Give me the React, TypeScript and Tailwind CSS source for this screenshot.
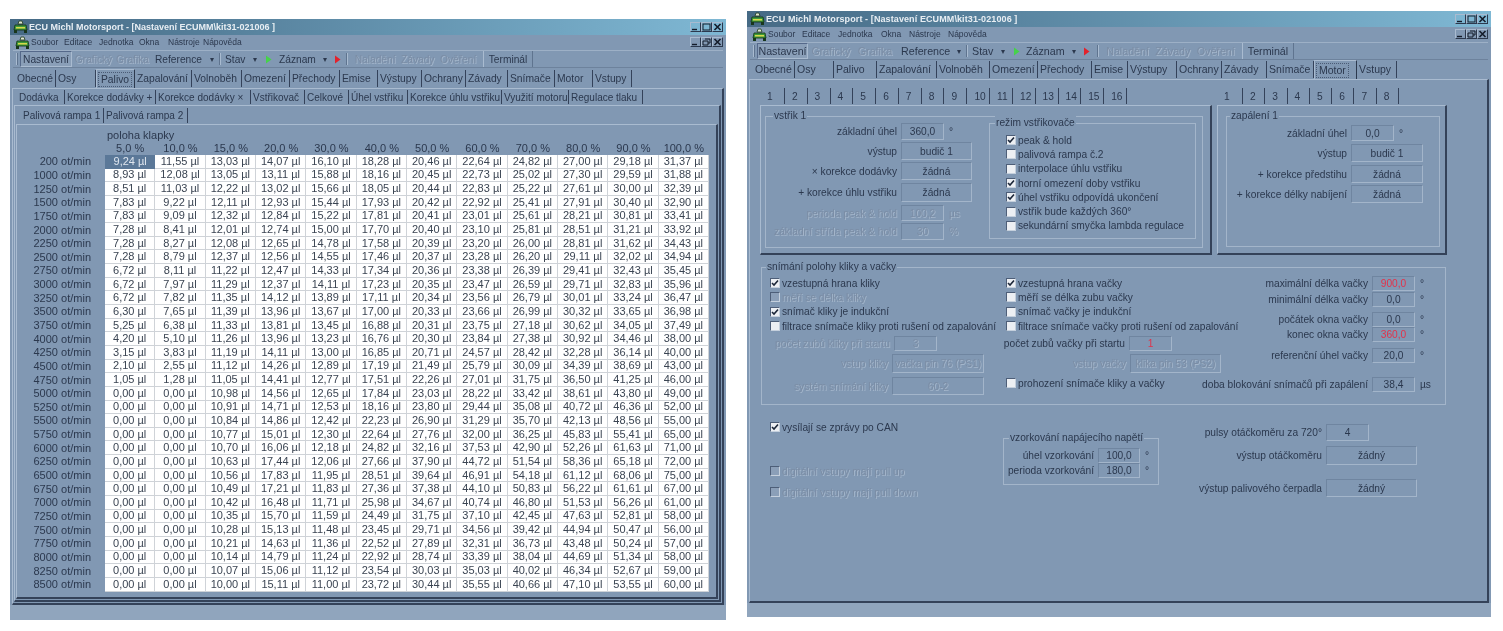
import React from "react";

const ink = "text-[#2b384e]";

type TabDef = [string, number];

const leftTabs: TabDef[] = [
  ["Obecné", 41], ["Osy", 40], ["Palivo", 39], ["Zapalování", 57], ["Volnoběh", 50], ["Omezení", 48], ["Přechody", 50],
  ["Emise", 38], ["Výstupy", 44], ["Ochrany", 44], ["Závady", 42], ["Snímače", 47], ["Motor", 38], ["Vstupy", 39],
];
const rightTabs: TabDef[] = [
  ["Obecné", 42], ["Osy", 39], ["Palivo", 43], ["Zapalování", 60], ["Volnoběh", 53], ["Omezení", 48], ["Přechody", 54],
  ["Emise", 36], ["Výstupy", 49], ["Ochrany", 45], ["Závady", 45], ["Snímače", 47], ["Motor", 43], ["Vstupy", 40],
];
const fuelTabs: TabDef[] = [
  ["Dodávka", 48], ["Korekce dodávky +", 91], ["Korekce dodávky ×", 95], ["Vstřikovač", 54], ["Celkové", 44],
  ["Úhel vstřiku", 59], ["Korekce úhlu vstřiku", 94], ["Využití motoru", 67], ["Regulace tlaku", 74],
];

const throttle = ["5,0 %", "10,0 %", "15,0 %", "20,0 %", "30,0 %", "40,0 %", "50,0 %", "60,0 %", "70,0 %", "80,0 %", "90,0 %", "100,0 %"];

const rows: [number, string][] = [
  [200, "9,24 11,55 13,03 14,07 16,10 18,28 20,46 22,64 24,82 27,00 29,18 31,37"],
  [1000, "8,93 12,08 13,05 13,11 15,88 18,16 20,45 22,73 25,02 27,30 29,59 31,88"],
  [1250, "8,51 11,03 12,22 13,02 15,66 18,05 20,44 22,83 25,22 27,61 30,00 32,39"],
  [1500, "7,83 9,22 12,11 12,93 15,44 17,93 20,42 22,92 25,41 27,91 30,40 32,90"],
  [1750, "7,83 9,09 12,32 12,84 15,22 17,81 20,41 23,01 25,61 28,21 30,81 33,41"],
  [2000, "7,28 8,41 12,01 12,74 15,00 17,70 20,40 23,10 25,81 28,51 31,21 33,92"],
  [2250, "7,28 8,27 12,08 12,65 14,78 17,58 20,39 23,20 26,00 28,81 31,62 34,43"],
  [2500, "7,28 8,79 12,37 12,56 14,55 17,46 20,37 23,28 26,20 29,11 32,02 34,94"],
  [2750, "6,72 8,11 11,22 12,47 14,33 17,34 20,36 23,38 26,39 29,41 32,43 35,45"],
  [3000, "6,72 7,97 11,29 12,37 14,11 17,23 20,35 23,47 26,59 29,71 32,83 35,96"],
  [3250, "6,72 7,82 11,35 14,12 13,89 17,11 20,34 23,56 26,79 30,01 33,24 36,47"],
  [3500, "6,30 7,65 11,39 13,96 13,67 17,00 20,33 23,66 26,99 30,32 33,65 36,98"],
  [3750, "5,25 6,38 11,33 13,81 13,45 16,88 20,31 23,75 27,18 30,62 34,05 37,49"],
  [4000, "4,20 5,10 11,26 13,96 13,23 16,76 20,30 23,84 27,38 30,92 34,46 38,00"],
  [4250, "3,15 3,83 11,19 14,11 13,00 16,85 20,71 24,57 28,42 32,28 36,14 40,00"],
  [4500, "2,10 2,55 11,12 14,26 12,89 17,19 21,49 25,79 30,09 34,39 38,69 43,00"],
  [4750, "1,05 1,28 11,05 14,41 12,77 17,51 22,26 27,01 31,75 36,50 41,25 46,00"],
  [5000, "0,00 0,00 10,98 14,56 12,65 17,84 23,03 28,22 33,42 38,61 43,80 49,00"],
  [5250, "0,00 0,00 10,91 14,71 12,53 18,16 23,80 29,44 35,08 40,72 46,36 52,00"],
  [5500, "0,00 0,00 10,84 14,86 12,42 22,23 26,90 31,29 35,70 42,13 48,56 55,00"],
  [5750, "0,00 0,00 10,77 15,01 12,30 22,64 27,76 32,00 36,25 45,83 55,41 65,00"],
  [6000, "0,00 0,00 10,70 16,06 12,18 24,82 32,16 37,53 42,90 52,26 61,63 71,00"],
  [6250, "0,00 0,00 10,63 17,44 12,06 27,66 37,90 44,72 51,54 58,36 65,18 72,00"],
  [6500, "0,00 0,00 10,56 17,83 11,95 28,51 39,64 46,91 54,18 61,12 68,06 75,00"],
  [6750, "0,00 0,00 10,49 17,21 11,83 27,36 37,38 44,10 50,83 56,22 61,61 67,00"],
  [7000, "0,00 0,00 10,42 16,48 11,71 25,98 34,67 40,74 46,80 51,53 56,26 61,00"],
  [7250, "0,00 0,00 10,35 15,70 11,59 24,49 31,75 37,10 42,45 47,63 52,81 58,00"],
  [7500, "0,00 0,00 10,28 15,13 11,48 23,45 29,71 34,56 39,42 44,94 50,47 56,00"],
  [7750, "0,00 0,00 10,21 14,63 11,36 22,52 27,89 32,31 36,73 43,48 50,24 57,00"],
  [8000, "0,00 0,00 10,14 14,79 11,24 22,92 28,74 33,39 38,04 44,69 51,34 58,00"],
  [8250, "0,00 0,00 10,07 15,06 11,12 23,54 30,03 35,03 40,02 46,34 52,67 59,00"],
  [8500, "0,00 0,00 10,00 15,11 11,00 23,72 30,44 35,55 40,66 47,10 53,55 60,00"],
];

const AppIcon = () => (
  <svg width="15" height="14" viewBox="0 0 15 14" className="shrink-0">
    <path d="M6 1h3l1 3H5z" fill="#dfe6d0" stroke="#1c3a1c" strokeWidth="0.8" />
    <path d="M2 5h11l1 5H1z" fill="#3f9a3c" stroke="#123012" strokeWidth="0.8" />
    <path d="M3 7h9v1.5H3z" fill="#d8d84a" />
    <rect x="1" y="10" width="3" height="3" fill="#18361c" />
    <rect x="11" y="10" width="3" height="3" fill="#18361c" />
  </svg>
);

const Arrow = ({ color }: { color: string }) => (
  <svg width="7" height="9" viewBox="0 0 7 9" className="shrink-0">
    <path d="M1 0.5 6.5 4.5 1 8.5z" fill={color} />
  </svg>
);

const WinBtn = ({ kind }: { kind: "min" | "max" | "restore" | "close" }) => (
  <div className="w-[11px] h-[10px] flex items-center justify-center border-r border-b border-[#2c394e] border-t-[#a9bbd0] border-l-[#a9bbd0] border-t border-l">
    <svg width="9" height="8" viewBox="0 0 9 8">
      {kind === "min" && <path d="M1 6.5h5" stroke="#141c2a" strokeWidth="1.4" />}
      {kind === "max" && <rect x="1" y="1" width="7" height="6" fill="none" stroke="#141c2a" strokeWidth="1" />}
      {kind === "restore" && <path d="M3 1h5v4H6M1 3h5v4H1z" fill="none" stroke="#141c2a" strokeWidth="1" />}
      {kind === "close" && <path d="M1.5 1 7.5 7M7.5 1 1.5 7" stroke="#141c2a" strokeWidth="1.6" />}
    </svg>
  </div>
);

const TitleBar = ({ className = "" }: { className?: string }) => (
  <div className="h-[16px] shrink-0 flex items-center pl-[3px] bg-gradient-to-r from-[#466a85] to-[#7fb8d4] relative">
    <AppIcon />
    <span className={`ml-[1px] text-[9px] font-bold text-[#e8eef3] whitespace-nowrap ${className}`}>
      ECU Michl Motorsport - [Nastavení ECUMM\kit31-021006 ]
    </span>
    <div className="absolute right-[3px] top-[3px] flex">
      <WinBtn kind="min" />
      <WinBtn kind="max" />
      <WinBtn kind="close" />
    </div>
  </div>
);

const Menu = ({ gaps }: { gaps: number[] }) => {
  const items = ["Soubor", "Editace", "Jednotka", "Okna", "Nástroje", "Nápověda"];
  return (
    <div className="h-[15px] flex items-center pl-[5px] relative">
      <AppIcon />
      <div className="flex items-center ml-[1px] text-[8.5px]">
        {items.map((m, i) => (
          <span key={m} className="whitespace-nowrap" style={{ width: gaps[i] }}>{m}</span>
        ))}
      </div>
      <div className="absolute right-[3px] top-[2px] flex">
        <WinBtn kind="min" />
        <WinBtn kind="restore" />
        <WinBtn kind="close" />
      </div>
    </div>
  );
};

const Disabled = ({ children, className = "" }: { children: React.ReactNode; className?: string }) => (
  <span className={`text-[#7b8da5] [text-shadow:1px_1px_0_#a4b6cb] ${className}`}>{children}</span>
);

// widths of the toolbar pieces differ a little between the two captures
const Toolbar = ({ w, className = "" }: { w: number[]; className?: string }) => (
  <div className={`h-[18px] flex items-stretch mx-[3px] border-t border-[#9db0c6] border-b border-b-[#6d829c] whitespace-nowrap ${className}`}>
    <div className="w-[2px] ml-[3px] mr-[2px] my-[2px] border-l border-[#a9bbd0] border-r border-r-[#5f748f]" />
    <div className="flex items-center justify-center border border-[#55698a] border-b-[#a9bbd0] border-r-[#a9bbd0] bg-[#8a9fb8]" style={{ width: w[0] }}>Nastavení</div>
    <div className="flex items-center justify-center" style={{ width: w[1] }}><Disabled>Grafický</Disabled></div>
    <div className="flex items-center justify-center" style={{ width: w[2] }}><Disabled>Grafika</Disabled></div>
    <div className="flex items-center justify-between pl-[5px] pr-[5px]" style={{ width: w[3] }}>
      <span>Reference</span><span className="text-[8px]">▾</span>
    </div>
    <div className="w-[2px] my-[2px] border-l border-[#5f748f] border-r border-r-[#a9bbd0]" />
    <div className="flex items-center pl-[4px] gap-[8px]" style={{ width: w[4] }}>
      <span>Stav</span><span className="text-[8px]">▾</span><Arrow color="#46d24a" />
    </div>
    <div className="flex items-center pl-[2px] gap-[7px]" style={{ width: w[5] }}>
      <span>Záznam</span><span className="text-[8px]">▾</span><Arrow color="#e2222c" />
    </div>
    <div className="w-[2px] my-[2px] border-l border-[#5f748f] border-r border-r-[#a9bbd0]" />
    <div className="flex items-center justify-around px-[4px]" style={{ width: w[6] }}>
      <Disabled>Naladění</Disabled><Disabled>Závady</Disabled><Disabled>Ověření</Disabled>
    </div>
    <div className="flex items-center justify-center border-l border-[#a9bbd0] border-r border-r-[#5f748f]" style={{ width: w[7] }}>Terminál</div>
  </div>
);

const TabRow = ({ tabs, active, start, h = 17, className = "" }: { tabs: TabDef[]; active: string; start: number; h?: number; className?: string }) => (
  <div className={`flex items-stretch ${className}`} style={{ paddingLeft: start, height: h }}>
    {tabs.map(([label, width]) => (
      <div
        key={label}
        style={{ width }}
        className={
          label === active
            ? "shrink-0 flex items-center pl-[2px] border-r-[1.5px] border-r-[#2c394e] border-t border-t-[#a9bbd0] border-l border-l-[#a9bbd0] whitespace-nowrap"
            : "shrink-0 flex items-center pl-[2px] border-r-[1.5px] border-r-[#34425a] whitespace-nowrap my-[1px]"
        }
      >
        <span className={label === active ? "border border-dotted border-[#4a5b75] px-[2px] -ml-[1px]" : ""}>{label}</span>
      </div>
    ))}
  </div>
);

const panel = "border-t border-l border-[#a9bbd0] border-r-2 border-r-[#344259] border-b-2 border-b-[#344259]";

const Group = ({ title, className, legendLeft = 8, children }: { title: string; className: string; legendLeft?: number; children: React.ReactNode }) => (
  <div className={`relative border border-[#a3b5ca] ${className}`}>
    <span className="absolute -top-[8px] bg-[#8198b3] px-[1px] leading-[14px] whitespace-nowrap" style={{ left: legendLeft }}>{title}</span>
    {children}
  </div>
);

const Check = ({ label, on = false, off = false, className = "" }: { label: string; on?: boolean; off?: boolean; className?: string }) => (
  <div className={`flex items-center gap-[2px] whitespace-nowrap ${className}`}>
    <div className={`w-[10px] h-[10px] shrink-0 flex items-center justify-center border border-[#4d5e78] border-r-[#c5d0dd] border-b-[#c5d0dd] ${off ? "bg-[#8b9fb8]" : "bg-[#eceff3]"}`}>
      {on && (
        <svg width="8" height="8" viewBox="0 0 8 8">
          <path d="M1 4l2 2 4-4.5" fill="none" stroke="#1b2638" strokeWidth="1.6" />
        </svg>
      )}
    </div>
    {off ? <Disabled>{label}</Disabled> : <span>{label}</span>}
  </div>
);

type FieldProps = {
  label: string;
  labelW: number;
  boxW: number;
  h?: number;
  value: string;
  unit?: string;
  off?: boolean;
  red?: boolean;
  mt?: number;
};

const Field = ({ label, labelW, boxW, h = 17, value, unit, off = false, red = false, mt = 0 }: FieldProps) => (
  <div className="flex items-center whitespace-nowrap" style={{ height: h, marginTop: mt }}>
    <div className="flex justify-end shrink-0 mr-[4px]" style={{ width: labelW }}>
      {off ? <Disabled>{label}</Disabled> : <span>{label}</span>}
    </div>
    <div
      className="h-full shrink-0 flex items-center justify-center border border-[#a3b5ca] border-t-[#6f85a0] border-l-[#6f85a0]"
      style={{ width: boxW }}
    >
      {off ? <Disabled>{value}</Disabled> : <span className={red ? "text-[#e2324a]" : ""}>{value}</span>}
    </div>
    {unit && (
      <span className="ml-[5px]">{off ? <Disabled>{unit}</Disabled> : unit}</span>
    )}
  </div>
);

const FuelTable = () => (
  <div className="pt-[4px] pl-[1px] pr-[7px] text-[11px] leading-none">
    <div className="pl-[89px] h-[13px] flex items-center">poloha klapky</div>
    <div className="grid grid-cols-[87px_repeat(12,minmax(0,1fr))] h-[13px] items-center">
      <div />
      {throttle.map((t) => (
        <div key={t} className="text-center">{t}</div>
      ))}
    </div>
    {rows.map(([rpm, values], r) => (
      <div key={rpm} className="grid grid-cols-[87px_repeat(12,minmax(0,1fr))] h-[13.65px] items-stretch">
        <div className="pr-[14px] text-right self-center">{rpm} ot/min</div>
        {values.split(" ").map((v, c) => (
          <div
            key={c}
            className={
              r === 0 && c === 0
                ? "flex items-center justify-center bg-[#5b7898] text-[#dfe6ef]"
                : "flex items-center justify-center bg-white border-r border-b border-[#cfd3d8] text-[#3a4452]"
            }
          >
            {v} µl
          </div>
        ))}
      </div>
    ))}
  </div>
);

const LeftWindow = () => (
  <div className="w-[716px] h-[601px] mt-[19px] ml-[10px] shrink-0 flex flex-col bg-[#8198b3]">
    <TitleBar />
    <Menu gaps={[33, 35, 40, 29, 35, 40]} />
    <Toolbar w={[52, 43, 35, 69, 56, 69, 135, 50]} className="text-[10.2px]" />
    <TabRow tabs={leftTabs} active="Palivo" start={5} h={19} className="mt-[1px] text-[10.3px]" />
    <div className={`mx-[2px] flex-1 flex flex-col ${panel}`}>
      <TabRow tabs={fuelTabs} active="" start={4} h={16} className="text-[10px]" />
      <div className={`mx-[1px] mb-[1px] flex-1 flex flex-col ${panel}`}>
        <TabRow tabs={[["Palivová rampa 1", 83], ["Palivová rampa 2", 84]]} active="" start={6} h={17} className="mt-[1px] text-[10px]" />
        <div className={`mx-[1px] mb-[1px] flex-1 ${panel}`}>
          <FuelTable />
        </div>
      </div>
    </div>
    <div className="h-[15px] bg-[#90a5bd]" />
  </div>
);

const RightWindow = () => (
  <div className="w-[744px] h-[606px] mt-[11px] ml-[21px] shrink-0 flex flex-col bg-[#8198b3] text-[10.2px]">
    <TitleBar className="tracking-[0.1px]" />
    <Menu gaps={[34, 36, 43, 28, 39, 40]} />
    <Toolbar w={[51, 46, 42, 70, 56, 73, 143, 52]} className="text-[10.7px]" />
    <TabRow tabs={rightTabs} active="Motor" start={6} h={19} className="text-[10.5px]" />
    <div className={`mx-[2px] flex-1 flex flex-col ${panel}`}>
      {/* top: injector and ignition tab boxes */}
      <div className="flex pl-[10px] pt-[7px] gap-[5px]">
        <div className="w-[452px]">
          <TabRow
            tabs={[["1", 25], ...["2", "3", "4", "5", "6", "7", "8", "9", "10", "11", "12", "13", "14", "15", "16"].map((n, i): TabDef => [n, i % 2 ? 23 : 22.6])]}
            active=""
            start={0}
            h={18}
            className="[&>div]:pl-[7px]"
          />
          <div className={`h-[150px] pt-[10px] px-[4px] ${panel}`}>
            <Group title="vstřik 1" className="h-[132px] w-[438px] flex" legendLeft={7}>
              <div className="w-[223px] pt-[6px] pl-[4px]">
                <Field label="základní úhel" labelW={127} boxW={43} value="360,0" unit="°" />
                <Field label="výstup" labelW={127} boxW={71} h={18} mt={2} value="budič 1" />
                <Field label="× korekce dodávky" labelW={127} boxW={71} h={18} mt={2} value="žádná" />
                <Field label="+ korekce úhlu vstřiku" labelW={127} boxW={71} h={19} mt={3} value="žádná" />
                <Field label="perioda peak & hold" labelW={127} boxW={43} h={16} mt={3} value="100,2" unit="µs" off />
                <Field label="základní střída peak & hold" labelW={127} boxW={43} h={17} mt={2} value="30" unit="%" off />
              </div>
              <Group title="režim vstřikovače" className="h-[116px] w-[207px] mt-[6px]" legendLeft={5}>
                <div className="pl-[16px] pt-[9px] flex flex-col gap-0">
                  {[
                    ["peak & hold", true],
                    ["palivová rampa č.2", false],
                    ["interpolace úhlu vstřiku", false],
                    ["horní omezení doby vstřiku", true],
                    ["úhel vstřiku odpovídá ukončení", true],
                    ["vstřik bude každých 360°", false],
                    ["sekundární smyčka lambda regulace", false],
                  ].map(([label, on]) => (
                    <Check key={label as string} label={label as string} on={on as boolean} className="h-[14.3px]" />
                  ))}
                </div>
              </Group>
            </Group>
          </div>
        </div>
        <div className="w-[230px]">
          <TabRow
            tabs={["1", "2", "3", "4", "5", "6", "7", "8"].map((n, i): TabDef => [n, i === 0 ? 26 : 22.3])}
            active=""
            start={0}
            h={18}
            className="[&>div]:pl-[7px]"
          />
          <div className={`h-[150px] pt-[10px] px-[8px] ${panel}`}>
            <Group title="zapálení 1" className="h-[131px] w-[214px]" legendLeft={3}>
              <div className="pt-[8px] pl-[2px]">
                <Field label="základní úhel" labelW={118} boxW={43} h={16} value="0,0" unit="°" />
                <Field label="výstup" labelW={118} boxW={72} h={18} mt={3} value="budič 1" />
                <Field label="+ korekce předstihu" labelW={118} boxW={72} h={18} mt={3} value="žádná" />
                <Field label="+ korekce délky nabíjení" labelW={118} boxW={72} h={18} mt={2} value="žádná" />
              </div>
            </Group>
          </div>
        </div>
      </div>

      {/* crank and cam sensing */}
      <Group title="snímání polohy kliky a vačky" className="h-[138px] w-[685px] ml-[11px] mt-[12px] flex" legendLeft={4}>
        <div className="w-[243px] shrink-0 pt-[8px] pl-[8px]">
          <Check label="vzestupná hrana kliky" on className="h-[14.3px]" />
          <Check label="měří se délka kliky" off className="h-[14.3px]" />
          <Check label="snímač kliky je indukční" on className="h-[14.3px]" />
          <Check label="filtrace snímače kliky proti rušení od zapalování" className="h-[14.3px]" />
          <div className="-ml-[8px]">
            <Field label="počet zubů kliky při startu" labelW={128} boxW={43} h={15} mt={3} value="3" off />
            <Field label="vstup kliky" labelW={126} boxW={92} h={19} mt={3} value="vačka pin 76 (PS1)" off />
            <Field label="systém snímání kliky" labelW={126} boxW={92} h={18} mt={4} value="60-2" off />
          </div>
        </div>
        <div className="w-[211px] shrink-0 pt-[8px] pl-[1px]">
          <Check label="vzestupná hrana vačky" on className="h-[14.3px]" />
          <Check label="měří se délka zubu vačky" className="h-[14.3px]" />
          <Check label="snímač vačky je indukční" className="h-[14.3px]" />
          <Check label="filtrace snímače vačky proti rušení od zapalování" className="h-[14.3px]" />
          <Field label="počet zubů vačky při startu" labelW={119} boxW={43} h={15} mt={3} value="1" red />
          <Field label="vstup vačky" labelW={120} boxW={91} h={19} mt={3} value="klika pin 53 (PS2)" off />
          <Check label="prohození snímače kliky a vačky" className="h-[14.3px] mt-[3px]" />
        </div>
        <div className="pt-[8px]">
          <Field label="maximální délka vačky" labelW={152} boxW={43} h={15} value="900,0" unit="°" red />
          <Field label="minimální délka vačky" labelW={152} boxW={43} h={15} mt={1} value="0,0" unit="°" />
          <Field label="počátek okna vačky" labelW={152} boxW={43} h={15} mt={5} value="0,0" unit="°" />
          <Field label="konec okna vačky" labelW={152} boxW={43} h={15} value="360,0" unit="°" red />
          <Field label="referenční úhel vačky" labelW={152} boxW={43} h={15} mt={6} value="20,0" unit="°" />
          <Field label="doba blokování snímačů při zapálení" labelW={152} boxW={43} h={15} mt={14} value="38,4" unit="µs" />
        </div>
      </Group>

      {/* bottom row */}
      <div className="flex mt-[14px] pl-[20px]">
        <div className="w-[233px] pt-[1px]">
          <Check label="vysílají se zprávy po CAN" on className="h-[14px]" />
          <Check label="digitální vstupy mají pull up" off className="h-[14px] mt-[30px]" />
          <Check label="digitální vstupy mají pull down" off className="h-[14px] mt-[7px]" />
        </div>
        <Group title="vzorkování napájecího napětí" className="h-[47px] w-[156px] mt-[19px]" legendLeft={5}>
          <div className="pt-[9px]">
            <Field label="úhel vzorkování" labelW={90} boxW={42} h={15} value="100,0" unit="°" />
            <Field label="perioda vzorkování" labelW={90} boxW={42} h={15} value="180,0" unit="°" />
          </div>
        </Group>
        <div className="ml-[1px] mt-[5px]">
          <Field label="pulsy otáčkoměru za 720°" labelW={162} boxW={43} value="4" />
          <Field label="výstup otáčkoměru" labelW={162} boxW={91} h={19} mt={5} value="žádný" />
          <Field label="výstup palivového čerpadla" labelW={162} boxW={91} h={18} mt={14} value="žádný" />
        </div>
      </div>
    </div>
    <div className="h-[14px] bg-[#90a5bd]" />
  </div>
);

export default function App() {
  return (
    <div className={`w-[1503px] h-[631px] overflow-hidden bg-white flex items-start text-[11px] leading-[13px] blur-[0.35px] font-['Liberation_Sans',Arial,sans-serif] ${ink}`}>
      <LeftWindow />
      <RightWindow />
    </div>
  );
}
